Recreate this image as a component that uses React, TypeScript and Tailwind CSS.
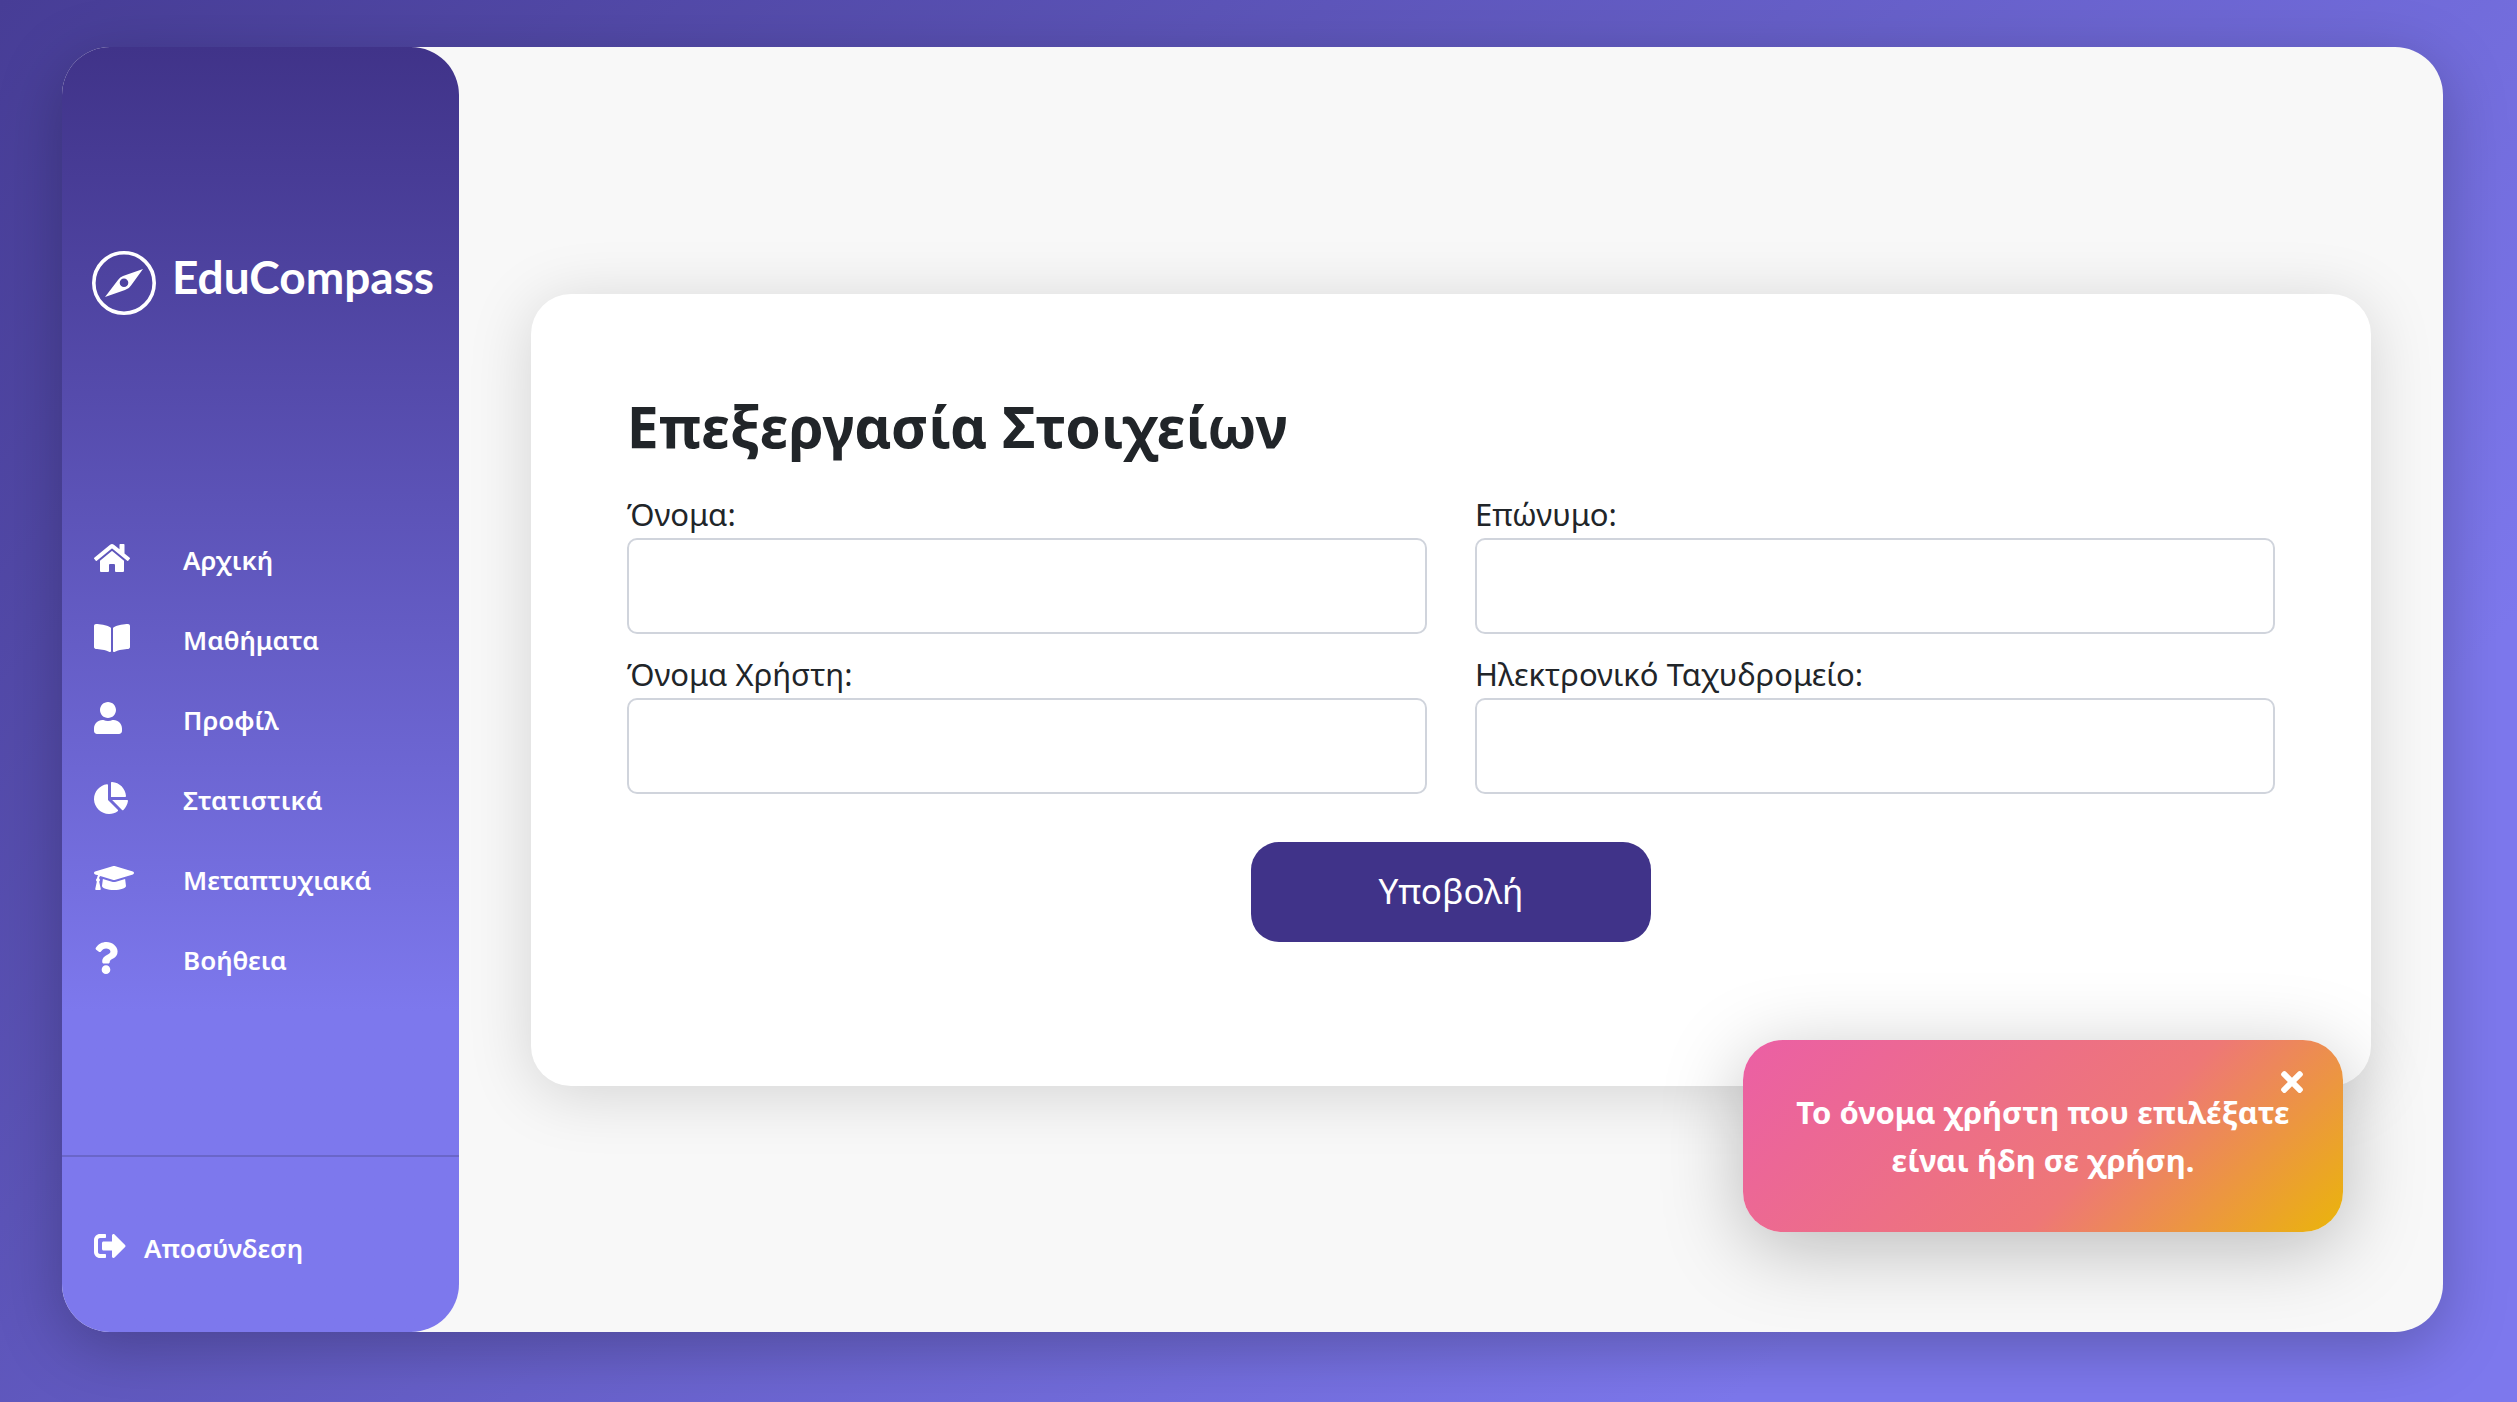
import { FaBookOpen, FaChartPie, FaGraduationCap, FaHome, FaQuestion, FaSignOutAlt, FaTimes, FaUser } from "react-icons/fa";

const navItems = [
  { label: "Αρχική", Icon: FaHome, width: "w-9" },
  { label: "Μαθήματα", Icon: FaBookOpen, width: "w-9" },
  { label: "Προφίλ", Icon: FaUser, width: "w-7" },
  { label: "Στατιστικά", Icon: FaChartPie, width: "w-[34px]" },
  { label: "Μεταπτυχιακά", Icon: FaGraduationCap, width: "w-10" },
  { label: "Βοήθεια", Icon: FaQuestion, width: "w-6" },
];

const fields = [
  { id: "first-name", label: "Όνομα:", type: "text" },
  { id: "last-name", label: "Επώνυμο:", type: "text" },
  { id: "username", label: "Όνομα Χρήστη:", type: "text" },
  { id: "email", label: "Ηλεκτρονικό Ταχυδρομείο:", type: "email" },
];

function Logo() {
  return (
    <a href="#" className="flex items-center gap-4 pl-[30px]">
      <svg viewBox="0 0 64 64" className="size-16 shrink-0" aria-hidden="true">
        <circle cx="32" cy="32" r="30.2" fill="none" stroke="#fff" strokeWidth="3.6" />
        <path
          fill="#fff"
          fillRule="evenodd"
          d="M51 18 39 34.5 Q37 38 33 39 L13 46 26 29 Q28 26 31 25Z M32 27.5a4.3 4.3 0 1 0 0 8.6 4.3 4.3 0 0 0 0-8.6Z"
        />
      </svg>
      <span className="pb-3 font-[Lato] text-[46px] leading-14 font-bold">EduCompass</span>
    </a>
  );
}

function Sidebar() {
  return (
    <aside className="flex w-1/6 shrink-0 flex-col rounded-[48px] bg-linear-to-b from-[#403389] to-[#7d78ed] to-75% text-white">
      <div className="pt-[202px]">
        <Logo />
      </div>
      <nav className="mt-auto mb-[155px]">
        <ul>
          {navItems.map(({ label, Icon, width }) => (
            <li key={label}>
              <a href="#" className="flex h-20 items-center pl-8 text-[26px] font-semibold">
                <span className="w-[89px] pb-1">
                  <Icon className={`h-8 ${width}`} aria-hidden="true" />
                </span>
                {label}
              </a>
            </li>
          ))}
        </ul>
      </nav>
      <div className="border-t-2 border-black/15 pt-[51px] pb-11">
        <a href="#" className="flex h-20 items-center gap-[18px] pl-8 text-[26px] font-semibold">
          <span className="pb-1">
            <FaSignOutAlt className="size-8" aria-hidden="true" />
          </span>
          Αποσύνδεση
        </a>
      </div>
    </aside>
  );
}

function EditForm() {
  return (
    <form className="w-full rounded-[40px] bg-white px-24 pt-24 pb-36 shadow-[0_8px_64px_rgba(0,0,0,0.15)]">
      <h1 className="mb-7 text-[57px] leading-[72px] font-bold">Επεξεργασία Στοιχείων</h1>
      <div className="grid grid-cols-2 gap-x-12 gap-y-4">
        {fields.map(({ id, label, type }) => (
          <div key={id}>
            <label htmlFor={id} className="block text-[31px] leading-12">
              {label}
            </label>
            <input
              id={id}
              name={id}
              type={type}
              className="block h-24 w-full rounded-[10px] border-2 border-[#d0d4dc] px-6 text-[31px]"
            />
          </div>
        ))}
      </div>
      <button type="submit" className="mx-auto mt-12 block h-25 w-100 rounded-[28px] bg-[#403389] text-[35px] text-white">
        Υποβολή
      </button>
    </form>
  );
}

function Toast() {
  return (
    <div
      role="alert"
      className="absolute right-[100px] bottom-[100px] w-150 rounded-[40px] bg-linear-[135deg,#eb5fa5_0%,#ee7777_60%,#eab50a_100%] px-8 py-12 text-center text-[31px] leading-12 font-bold text-white shadow-[0_16px_80px_rgba(0,0,0,0.25)]"
    >
      Το όνομα χρήστη που επιλέξατε είναι ήδη σε χρήση.
      <button type="button" aria-label="Κλείσιμο" className="absolute top-[26px] right-10">
        <FaTimes className="h-8 w-[22px]" />
      </button>
    </div>
  );
}

export default function App() {
  return (
    <div className="flex min-h-screen bg-linear-[135deg,#473d96_0%,#7d78ed_80%] pt-[47px] pr-[74px] pb-[70px] pl-[62px] font-['Noto_Sans',sans-serif] text-[#212529]">
      <div className="relative flex flex-1 rounded-[48px] bg-[#f8f8f8] shadow-[0_16px_64px_rgba(0,0,0,0.25)]">
        <Sidebar />
        <main className="flex flex-1 items-center px-[72px]">
          <EditForm />
        </main>
        <Toast />
      </div>
    </div>
  );
}
